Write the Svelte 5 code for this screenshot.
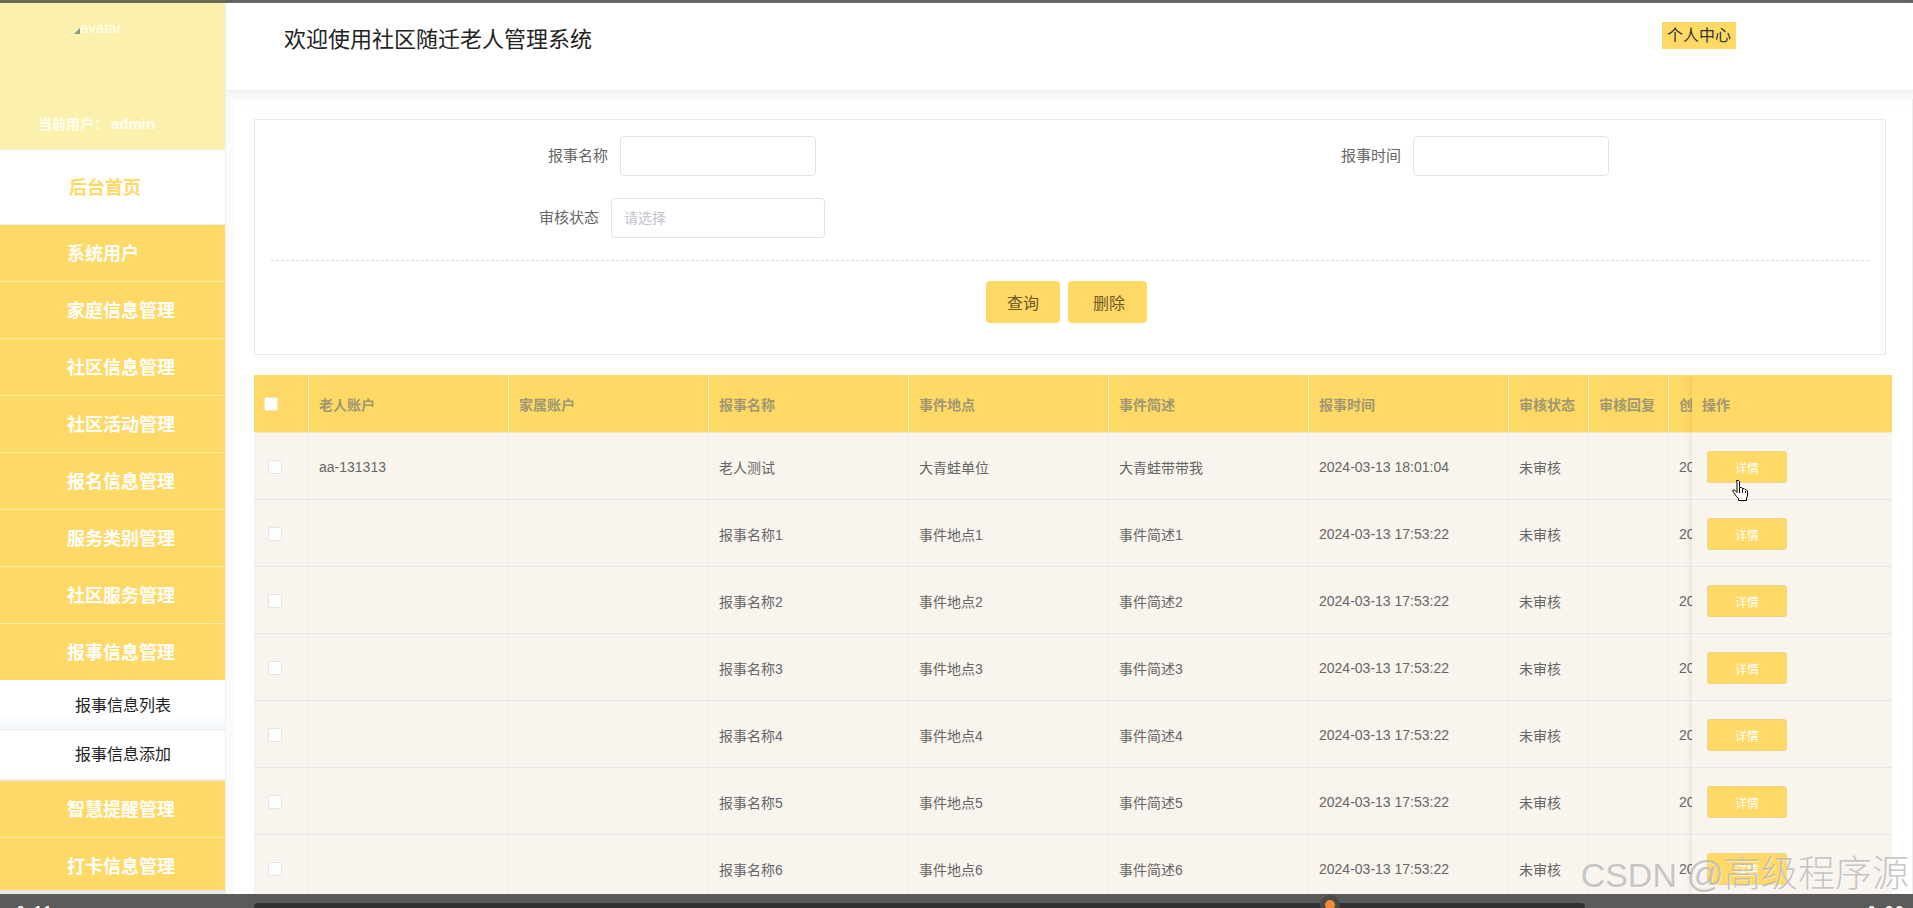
<script>
  const menuTop = ['系统用户','家庭信息管理','社区信息管理','社区活动管理','报名信息管理','服务类别管理','社区服务管理'];
  const rows = [
    { user:'aa-131313', name:'老人测试', place:'大青蛙单位', desc:'大青蛙带带我', time:'2024-03-13 18:01:04' },
    ...[1,2,3,4,5,6].map(n => ({ user:'', name:'报事名称'+n, place:'事件地点'+n, desc:'事件简述'+n, time:'2024-03-13 17:53:22' }))
  ];
  const heads = ['老人账户','家属账户','报事名称','事件地点','事件简述','报事时间','审核状态','审核回复','创建时间'];
</script>

<div class="page">
  <div class="strip"></div>
  <div class="body">
    <aside class="side">
      <div class="user">
        <div class="avatar">
          <svg class="broken" width="6" height="6" viewBox="0 0 6 6"><path d="M0 6 L6 0 V6 Z" fill="#7f9a7c"/></svg>
          <span>avatar</span>
        </div>
        <div class="who">当前用户：<span class="admin">admin</span></div>
      </div>
      <div class="home">后台首页</div>
      {#each menuTop as m}
        <div class="item">{m}</div>
      {/each}
      <div class="item open">报事信息管理</div>
      <div class="sub first">报事信息列表</div>
      <div class="sub second">报事信息添加</div>
      <div class="item">智慧提醒管理</div>
      <div class="item">打卡信息管理</div>
    </aside>

    <main class="main">
      <header class="head">
        <h1>欢迎使用社区随迁老人管理系统</h1>
        <a class="center">个人中心</a>
      </header>
      <section class="card">
        <div class="search">
          <div class="line one">
            <div class="field"><label>报事名称</label><div class="input"></div></div>
            <div class="field f2"><label>报事时间</label><div class="input"></div></div>
          </div>
          <div class="line two">
            <div class="field"><label>审核状态</label><div class="input select">请选择</div></div>
          </div>
          <div class="actions">
            <button class="btn b1">查询</button>
            <button class="btn b2">删除</button>
          </div>
        </div>

        <div class="tablewrap">
          <table class="grid">
            <colgroup>
              <col style="width:55px" />
              {#each heads as h, i}
                <col style="width:{i === 6 || i === 7 ? 80 : 200}px" />
              {/each}
            </colgroup>
            <thead>
              <tr>
                <th class="chk"><span class="box head-box"></span></th>
                {#each heads as h}<th>{h}</th>{/each}
              </tr>
            </thead>
            <tbody>
              {#each rows as r}
                <tr>
                  <td class="chk"><span class="box"></span></td>
                  <td>{r.user}</td>
                  <td></td>
                  <td>{r.name}</td>
                  <td>{r.place}</td>
                  <td>{r.desc}</td>
                  <td>{r.time}</td>
                  <td>未审核</td>
                  <td></td>
                  <td>2024-03-13 17:53:22</td>
                </tr>
              {/each}
            </tbody>
          </table>
          <table class="grid fixed">
            <thead><tr><th>操作</th></tr></thead>
            <tbody>
              {#each rows as r}
                <tr><td><button class="detail">详情</button></td></tr>
              {/each}
            </tbody>
          </table>
        </div>
      </section>
    </main>
  </div>

  <svg class="hand" width="18" height="23" viewBox="0 0 18 23">
    <path d="M5.5 .5 h2 l1 1 v6 h2 l1 1 h1.500 l1 1 h1 l1.500 1.500 v5 l-1 2 v2.500 h-8 v-2 l-2-2 l-3.500-5 v-1.500 h1.500 l2.500 2.500 v-10 z" fill="#fff" stroke="#000" stroke-width="1"/>
    <path d="M8.500 8 v5 M11.500 9 v4 M14.500 11 v2" stroke="#000" fill="none"/>
  </svg>

  <div class="watermark">CSDN <span class="wm-cjk">@高级程序源</span></div>

  <footer class="player">
    <span class="time left">0:11</span>
    <div class="track"><span class="knob"></span></div>
    <span class="time right">0:32</span>
  </footer>
</div>

<style>
  :global(body) {
    margin: 0;
    overflow: hidden;
    font-family: "Liberation Sans", "Noto Sans CJK SC", sans-serif;
  }
  .page {
    position: relative;
    width: 1913px;
    height: 908px;
    overflow: hidden;
    background: #fff;
    display: flex;
    flex-direction: column;
  }
  .strip {
    height: 3px;
    flex: none;
    background: linear-gradient(90deg, #6b6a52 0, #6b6a52 225px, #5e5e5e 225px);
  }
  .body { display: flex; flex: 1; min-height: 0; }

  .side {
    width: 226px;
    flex: none;
    height: 891px;
    overflow: hidden;
    box-sizing: border-box;
    border-bottom: 4px solid #e9e9ec;
    border-right: 1px solid #f0f0ee;
  }
  .user {
    height: 147px;
    box-sizing: border-box;
    background: #fcf1ac;
    border-bottom: 1px solid #efeedd;
    color: #fffef2;
    display: flex;
    flex-direction: column;
  }
  .avatar {
    display: flex;
    align-items: flex-end;
    margin: 17px 0 0 74px;
    font-size: 15px;
    line-height: 16px;
  }
  .broken { margin-bottom: 2px; }
  .who {
    margin: auto 0 16px 38px;
    font-size: 14px;
    font-weight: bold;
    line-height: 18px;
    white-space: nowrap;
  }
  .admin { font-size: 15px; margin-left: 3px; }
  .home {
    height: 75px;
    box-sizing: border-box;
    padding-left: 69px;
    line-height: 76px;
    font-size: 18px;
    font-weight: bold;
    color: #ffd966;
    background: #fff;
    border-bottom: 1px solid #eee;
  }
  .item {
    height: 57px;
    box-sizing: border-box;
    padding-left: 67px;
    line-height: 58px;
    font-size: 18px;
    font-weight: bold;
    color: #fff;
    background: #ffd966;
    border-bottom: 1px solid #ffeaa6;
  }
  .item.open { height: 56px; border-bottom: none; }
  .sub {
    height: 50px;
    box-sizing: border-box;
    padding-left: 75px;
    line-height: 52px;
    font-size: 16px;
    color: #222;
    background: #fff;
    border-bottom: 1px solid #e6e8ea;
  }
  .sub.first { background: linear-gradient(#fff 70%, #f4f8fb 100%); }
  .sub.second { height: 51px; line-height: 50px; border-bottom: 2px solid #ececec; }

  .main { flex: 1; min-width: 0; display: flex; flex-direction: column; background: #fbfbfb; }
  .head {
    height: 88px;
    flex: none;
    box-sizing: border-box;
    background: #fff;
    border-bottom: 1px solid #e9ecec;
    display: flex;
    align-items: flex-start;
    padding-left: 58px;
    padding-right: 177px;
    box-shadow: 0 3px 8px rgba(230, 232, 230, .5);
    position: relative;
  }
  h1 {
    margin: 22px 0 0;
    font-size: 22px;
    line-height: 30px;
    font-weight: 400;
    color: #222;
  }
  .center {
    margin: 19px 0 0 auto;
    width: 74px;
    height: 27px;
    line-height: 28px;
    text-align: center;
    font-size: 16px;
    color: #333;
    background: #ffd966;
  }
  .card {
    flex: 1;
    min-height: 0;
    margin: 8px 0 0 8px;
    padding: 20px 0 0 20px;
    box-sizing: border-box;
    background: #fff;
    border-right: 1px solid #eee;
  }
  .search {
    width: 1632px;
    height: 236px;
    box-sizing: border-box;
    border: 1px solid #e9e9e9;
    padding: 16px 16px 0;
  }
  .line { display: flex; }
  .line.one { padding-left: 277px; }
  .line.two { padding-left: 268px; margin-top: 22px; padding-bottom: 22px; border-bottom: 1px dashed #dcdcc8; }
  .field { display: flex; align-items: center; gap: 12px; }
  .f2 { margin-left: 525px; }
  label { font-size: 15px; color: #666; line-height: 40px; }
  .input {
    width: 196px;
    height: 40px;
    box-sizing: border-box;
    border: 1px solid #e2e2e2;
    border-radius: 4px;
    background: #fff;
  }
  .select {
    width: 214px;
    padding-left: 12px;
    line-height: 38px;
    font-size: 14px;
    color: #c0c4cc;
  }
  .actions { display: flex; gap: 8px; justify-content: flex-start; margin: 20px 0 0 715px; }
  .btn {
    height: 42px;
    border: none;
    border-radius: 4px;
    background: #ffd966;
    font: 16px "Liberation Sans", "Noto Sans CJK SC", sans-serif;
    color: #6e5a24;
    padding: 0;
  }
  .b1 { width: 74px; }
  .b2 { width: 79px; padding-left: 3px; }

  .tablewrap {
    position: relative;
    width: 1638px;
    height: 540px;
    margin-top: 20px;
    overflow: hidden;
  }
  .grid {
    border-collapse: separate;
    border-spacing: 0;
    table-layout: fixed;
    width: 1615px;
    font-size: 14px;
  }
  th {
    height: 58px;
    box-sizing: border-box;
    padding: 0 10px;
    text-align: left;
    background: #ffd966;
    color: #a09873;
    font-weight: bold;
    white-space: nowrap;
    overflow: hidden;
    border-right: 1px solid #fff2c4;
    border-bottom: 1px solid #f5e9c6;
  }
  td {
    height: 67px;
    box-sizing: border-box;
    padding: 2px 10px 0;
    background: #f9f4ee;
    color: #666;
    border-right: 1px solid #edeef0;
    border-bottom: 1px solid #e6e7e8;
    white-space: nowrap;
    overflow: hidden;
  }
  th.chk { padding-left: 10px; }
  td.chk { padding-left: 14px; }
  .box {
    display: block;
    width: 14px;
    height: 14px;
    box-sizing: border-box;
    background: #fff;
    border: 1px solid #e4e4e4;
    border-radius: 2px;
  }
  .head-box { border-color: #f0e6c0; }
  .fixed {
    position: absolute;
    top: 0;
    right: 0;
    width: 200px;
    box-shadow: 0 0 8px rgba(0, 0, 0, .1);
  }
  .fixed th, .fixed td { border-right: none; }
  .fixed td { padding-left: 15px; }
  .detail {
    display: block;
    width: 80px;
    height: 32px;
    padding: 0;
    border: 1px solid #ecd588;
    border-radius: 3px;
    background: #ffd966;
    color: #fff;
    font: 12px "Liberation Sans", "Noto Sans CJK SC", sans-serif;
  }
  .hand { position: absolute; left: 1731px; top: 480px; }
  .watermark {
    position: absolute;
    right: 4px;
    top: 853px;
    font-size: 34px;
    line-height: 44px;
    font-weight: 200;
    white-space: nowrap;
    color: rgba(175, 175, 175, .7);
    text-shadow: 1px 1px 0 rgba(255, 255, 255, .55);
  }
  .wm-cjk { font-size: 37px; }
  .player {
    position: absolute;
    left: 0;
    right: 0;
    bottom: 0;
    height: 14px;
    overflow: hidden;
    background: #5b5b5a;
  }
  .track {
    position: absolute;
    left: 254px;
    top: 9px;
    width: 1331px;
    height: 10px;
    background: #323232;
    border-radius: 4px 4px 0 0;
  }
  .knob {
    position: absolute;
    left: 1071px;
    top: -3px;
    width: 10px;
    height: 10px;
    border-radius: 50%;
    background: #f28a2e;
    box-shadow: 0 0 0 5px #4a4a4a;
  }
  .time {
    position: absolute;
    top: 10px;
    font-size: 13px;
    font-weight: bold;
    line-height: 14px;
    color: #fff;
  }
  .left { left: 17px; letter-spacing: 3px; }
  .right { left: 1868px; letter-spacing: 3px; }
</style>
